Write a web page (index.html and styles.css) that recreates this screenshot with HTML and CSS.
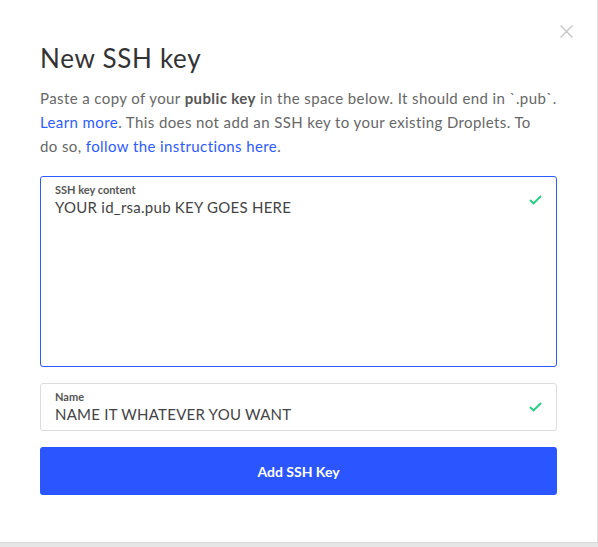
FILE: index.html
```html
<!DOCTYPE html>
<html>
<head>
<meta charset="utf-8">
<link rel="stylesheet" href="styles.css">
</head>
<body>
<div class="modal">
  <button class="close" aria-label="Close">
    <svg width="13" height="13" viewBox="0 0 13 13"><path d="M0.5 0.5L12.5 12.5M12.5 0.5L0.5 12.5" stroke="#c4c4c4" stroke-width="1.3" fill="none"/></svg>
  </button>
  <h1 class="title">New SSH key</h1>
  <p class="desc">Paste a copy of your <b>public key</b> in the space below. It should end in `.pub`. <a href="#">Learn more</a>. This does not add an SSH key to your existing Droplets. To<br>do so, <a href="#">follow the instructions here</a>.</p>
  <div class="field field-area focused">
    <div class="label">SSH key content</div>
    <div class="value">YOUR id_rsa.pub KEY GOES HERE</div>
    <svg class="check" width="13" height="10" viewBox="0 0 13 10"><path d="M1 5L4.5 8.5L12 1" stroke="#1ed37e" stroke-width="1.8" fill="none"/></svg>
  </div>
  <div class="field field-input">
    <div class="label">Name</div>
    <div class="value">NAME IT WHATEVER YOU WANT</div>
    <svg class="check" width="13" height="10" viewBox="0 0 13 10"><path d="M1 5L4.5 8.5L12 1" stroke="#1ed37e" stroke-width="1.8" fill="none"/></svg>
  </div>
  <button class="submit">Add SSH Key</button>
</div>
</body>
</html>
```
FILE: styles.css
```css
html, body {
  margin: 0;
  padding: 0;
}
body {
  background: #e6e6e6;
  font-family: Lato, "Open Sans", sans-serif;
  width: 598px;
  height: 547px;
  overflow: hidden;
}
.modal {
  position: relative;
  box-sizing: border-box;
  width: 598px;
  height: 543px;
  background: #fff;
  border-bottom: 1px solid #d9d9d9;
  border-right: 1px solid #e0e0e0;
  padding: 42px 40px 0 40px;
}
.close {
  position: absolute;
  top: 25px;
  right: 24px;
  border: 0;
  background: none;
  padding: 0;
  width: 13px;
  height: 13px;
  display: flex;
}
.title {
  margin: 0;
  font-size: 26px;
  font-weight: 400;
  color: #333;
  line-height: 32px;
  letter-spacing: 0.7px;
}
.desc {
  margin: 12px 0 0 0;
  font-size: 15px;
  line-height: 24px;
  color: #676767;
  letter-spacing: 0.4px;
}
.desc b {
  font-weight: 700;
  color: #555;
}
.desc a {
  color: #2d5bff;
  text-decoration: none;
}
.field {
  position: relative;
  box-sizing: border-box;
  border: 1px solid #dcdcdc;
  border-radius: 3px;
  padding: 6px 14px 0 14px;
  color: #444;
}
.field-area {
  margin-top: 18px;
  height: 191px;
}
.focused {
  border-color: #2e5bff;
}
.field-input {
  margin-top: 16px;
  height: 48px;
}
.label {
  font-size: 11px;
  font-weight: 700;
  color: #555;
  line-height: 14px;
}
.value {
  font-size: 15px;
  line-height: 20px;
  color: #444;
  letter-spacing: 0.25px;
}
.check {
  position: absolute;
  right: 14px;
  top: 18px;
}
.submit {
  display: block;
  width: 100%;
  margin-top: 16px;
  height: 48px;
  border: 0;
  border-radius: 3px;
  background: #2a55ff;
  color: #fff;
  font-family: Lato, "Open Sans", sans-serif;
  font-size: 14px;
  font-weight: 700;
}
```
